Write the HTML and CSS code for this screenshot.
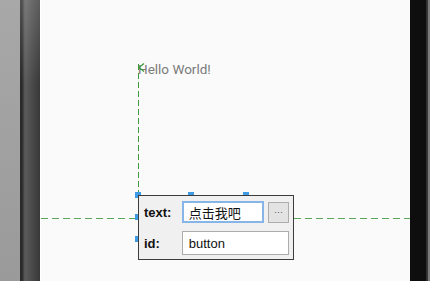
FILE: index.html
```html
<!DOCTYPE html>
<html lang="zh">
<head>
    <meta charset="UTF-8">
    <meta name="viewport" content="width=device-width, initial-scale=1.0">
    <title>Layout Editor</title>
    <link rel="stylesheet" href="styles.css">
</head>
<body>
    <div class="gutter"></div>
    <div class="bezel-left"></div>

    <div class="screen">
        <div class="hello">Hello World!</div>

        <div class="guide-v"></div>
        <svg class="guide-arrow" width="7" height="9" viewBox="0 0 7 9">
            <polyline points="6,0.5 1,4.5 6,8.5" fill="none" stroke="#3f9a3f" stroke-width="1.3"/>
        </svg>
        <div class="guide-h"></div>

        <div class="handle" style="left: 94px; top: 192px;"></div>
        <div class="handle" style="left: 147px; top: 192px;"></div>
        <div class="handle" style="left: 202px; top: 192px;"></div>
        <div class="handle" style="left: 94px; top: 214px;"></div>
        <div class="handle" style="left: 94px; top: 236px;"></div>

        <div class="props">
            <div class="prop-row">
                <label class="prop-label">text:</label>
                <div class="prop-input focused">点击我吧</div>
                <button class="prop-more">···</button>
            </div>
            <div class="prop-row">
                <label class="prop-label">id:</label>
                <div class="prop-input wide">button</div>
            </div>
        </div>
    </div>

    <div class="bezel-right"></div>
    <div class="edge"></div>
</body>
</html>
```

FILE: styles.css
```css
html, body {
    margin: 0;
    height: 100%;
}
body {
    display: flex;
    overflow: hidden;
    background: #fafafa;
}
.gutter {
    width: 20px;
    background: linear-gradient(to bottom, #a8a8a8, #9a9a9a);
}
.bezel-left {
    width: 20px;
    background:
        linear-gradient(to bottom, rgba(255, 255, 255, 0.18), rgba(255, 255, 255, 0) 30%),
        linear-gradient(to right, #2a2a2a 0, #2a2a2a 2px, #5c5c5c 5px, #4a4a4a 12px, #383838 20px);
}
.screen {
    flex: 1;
    position: relative;
    background: #fafafa;
    border-left: 1px solid #ffffff;
}
.bezel-right {
    width: 16px;
    background: #0e0e0e;
}
.edge {
    width: 4px;
    background: linear-gradient(to right, #2c2c2c, #3a3a3a 50%, #7a7a7a 50%, #7a7a7a);
}

.hello {
    position: absolute;
    left: 97px;
    top: 61px;
    font-family: Roboto, "Noto Sans", sans-serif;
    font-size: 13.5px;
    color: #7a7a7a;
}

.guide-v {
    position: absolute;
    left: 97px;
    top: 64px;
    width: 1px;
    height: 131px;
    background: repeating-linear-gradient(to bottom, #3f9a3f 0, #3f9a3f 6px, transparent 6px, transparent 9px);
}
.guide-arrow {
    position: absolute;
    left: 97px;
    top: 63px;
}
.guide-h {
    position: absolute;
    left: 0;
    right: 0;
    top: 218px;
    height: 1px;
    background: repeating-linear-gradient(to right, #5aa65a 0, #5aa65a 7px, transparent 7px, transparent 11px);
}

.handle {
    position: absolute;
    width: 6px;
    height: 6px;
    background: #3d9be6;
}

.props {
    position: absolute;
    left: 97px;
    top: 195px;
    width: 145px;
    padding: 5px 4px 4px 5px;
    display: flex;
    flex-direction: column;
    gap: 8px;
    background: #f0f0f0;
    border: 1px solid #3c3c3c;
    font-family: "Liberation Sans", Arial, sans-serif;
}
.prop-row {
    display: flex;
    align-items: center;
    gap: 4px;
}
.prop-label {
    width: 34px;
    font-weight: bold;
    font-size: 13px;
    color: #111;
}
.prop-input {
    box-sizing: border-box;
    width: 83px;
    height: 22px;
    padding: 0 6px;
    display: flex;
    align-items: center;
    background: #ffffff;
    border: 1px solid #acacac;
    font-family: "Liberation Sans", "Noto Sans CJK SC", sans-serif;
    font-size: 13px;
    color: #111;
}
.prop-input.focused {
    border: 2px solid #86b6e8;
    padding-left: 5px;
}
.prop-input.wide {
    width: 108px;
    height: 24px;
}
.prop-more {
    box-sizing: border-box;
    width: 21px;
    height: 21px;
    padding: 0;
    background: #e3e3e3;
    border: 1px solid #adadad;
    font-size: 9px;
    color: #555;
    line-height: 1;
}
```
